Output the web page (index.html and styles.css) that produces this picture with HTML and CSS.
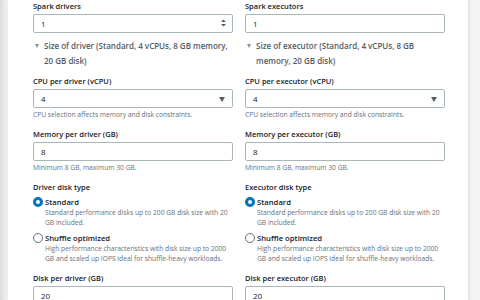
FILE: index.html
```html
<!DOCTYPE html>
<html lang="en">
<head>
<meta charset="UTF-8">
<title>Spark capacity</title>
<link rel="stylesheet" href="styles.css">
</head>
<body>
<div class="page">
    <div class="card">
        <div class="col">
            <div class="field">
                <label class="lbl">Spark drivers</label>
                <div class="box">1<span class="spin"><svg width="5" height="8" viewBox="0 0 5 8"><path d="M0 3 L2.5 0.5 L5 3Z M0 5 L2.5 7.5 L5 5Z" fill="#545b64"/></svg></span></div>
            </div>
            <div class="expander"><span class="caret"></span><span>Size of driver (Standard, 4 vCPUs, 8 GB memory, 20 GB disk)</span></div>
            <div class="field">
                <label class="lbl">CPU per driver (vCPU)</label>
                <div class="box">4<span class="arrow"></span></div>
                <p class="help">CPU selection affects memory and disk constraints.</p>
            </div>
            <div class="field">
                <label class="lbl">Memory per driver (GB)</label>
                <div class="box">8</div>
                <p class="help">Minimum 8 GB, maximum 30 GB.</p>
            </div>
            <div class="field">
                <label class="lbl">Driver disk type</label>
                <div class="radio">
                    <span class="dot on"></span>
                    <div>
                        <div class="rtitle">Standard</div>
                        <p class="rdesc">Standard performance disks up to 200 GB disk size with 20 GB included.</p>
                    </div>
                </div>
                <div class="radio">
                    <span class="dot"></span>
                    <div>
                        <div class="rtitle">Shuffle optimized</div>
                        <p class="rdesc">High performance characteristics with disk size up to 2000 GB and scaled up IOPS ideal for shuffle-heavy workloads.</p>
                    </div>
                </div>
            </div>
            <div class="field">
                <label class="lbl">Disk per driver (GB)</label>
                <div class="box">20</div>
            </div>
        </div>
        <div class="col">
            <div class="field">
                <label class="lbl">Spark executors</label>
                <div class="box">1</div>
            </div>
            <div class="expander"><span class="caret"></span><span>Size of executor (Standard, 4 vCPUs, 8 GB memory, 20 GB disk)</span></div>
            <div class="field">
                <label class="lbl">CPU per executor (vCPU)</label>
                <div class="box">4<span class="arrow"></span></div>
                <p class="help">CPU selection affects memory and disk constraints.</p>
            </div>
            <div class="field">
                <label class="lbl">Memory per executor (GB)</label>
                <div class="box">8</div>
                <p class="help">Minimum 8 GB, maximum 30 GB.</p>
            </div>
            <div class="field">
                <label class="lbl">Executor disk type</label>
                <div class="radio">
                    <span class="dot on"></span>
                    <div>
                        <div class="rtitle">Standard</div>
                        <p class="rdesc">Standard performance disks up to 200 GB disk size with 20 GB included.</p>
                    </div>
                </div>
                <div class="radio">
                    <span class="dot"></span>
                    <div>
                        <div class="rtitle">Shuffle optimized</div>
                        <p class="rdesc">High performance characteristics with disk size up to 2000 GB and scaled up IOPS ideal for shuffle-heavy workloads.</p>
                    </div>
                </div>
            </div>
            <div class="field">
                <label class="lbl">Disk per executor (GB)</label>
                <div class="box">20</div>
            </div>
        </div>
    </div>
</div>
</body>
</html>
```

FILE: styles.css
```css
body {margin: 0; background: #ececec; font-family: 'Open Sans', 'Noto Sans', sans-serif; color: #16191f;}
p {margin: 0;}
.page {height: 300px; overflow: hidden; background: linear-gradient(90deg, #dcdcdc 0, #f3f3f3 8px, #f3f3f3 100%);}
.card {display: flex; gap: 12px; margin-left: 8px; width: 460px; height: 300px; padding: 0 23px 0 25px; box-sizing: border-box; background: #fff; box-shadow: 1px 0 3px rgba(0,0,0,0.12);}
.col {display: flex; flex-direction: column; width: 200px;}
.field {display: flex; flex-direction: column;}
.lbl {font-size: 7.5px; font-weight: 600; line-height: 12px; margin-bottom: 2px;}
.box {position: relative; height: 19px; border: 1px solid #aab7b8; border-radius: 2px; box-sizing: border-box; padding: 0 7px; font-size: 8px; line-height: 17px;}
.spin {position: absolute; right: 6px; top: 4px; line-height: 0;}
.arrow {position: absolute; right: 7px; top: 7px; border-left: 3.5px solid transparent; border-right: 3.5px solid transparent; border-top: 5px solid #545b64;}
.help {font-size: 6.7px; color: #687078; line-height: 10px; margin-top: 2px;}
.expander {display: flex; gap: 5px; margin: 5px 0 7px 2px; font-size: 8px; font-weight: 600; line-height: 15px; color: #545b64;}
.caret {flex: none; width: 0; height: 0; margin-top: 6px; border-left: 2.5px solid transparent; border-right: 2.5px solid transparent; border-top: 4px solid #879596;}
.field + .field {margin-top: 8px;}
.radio {display: flex; gap: 2px; margin-top: 1px;}
.radio + .radio {margin-top: 4px;}
.dot {flex: none; width: 10px; height: 10px; margin-top: 1px; border: 1px solid #687078; border-radius: 50%; box-sizing: border-box;}
.dot.on {border: 3px solid #0073bb;}
.rtitle {font-size: 7.7px; font-weight: 600; line-height: 12px;}
.rdesc {font-size: 6.7px; color: #687078; line-height: 10px;}
```
